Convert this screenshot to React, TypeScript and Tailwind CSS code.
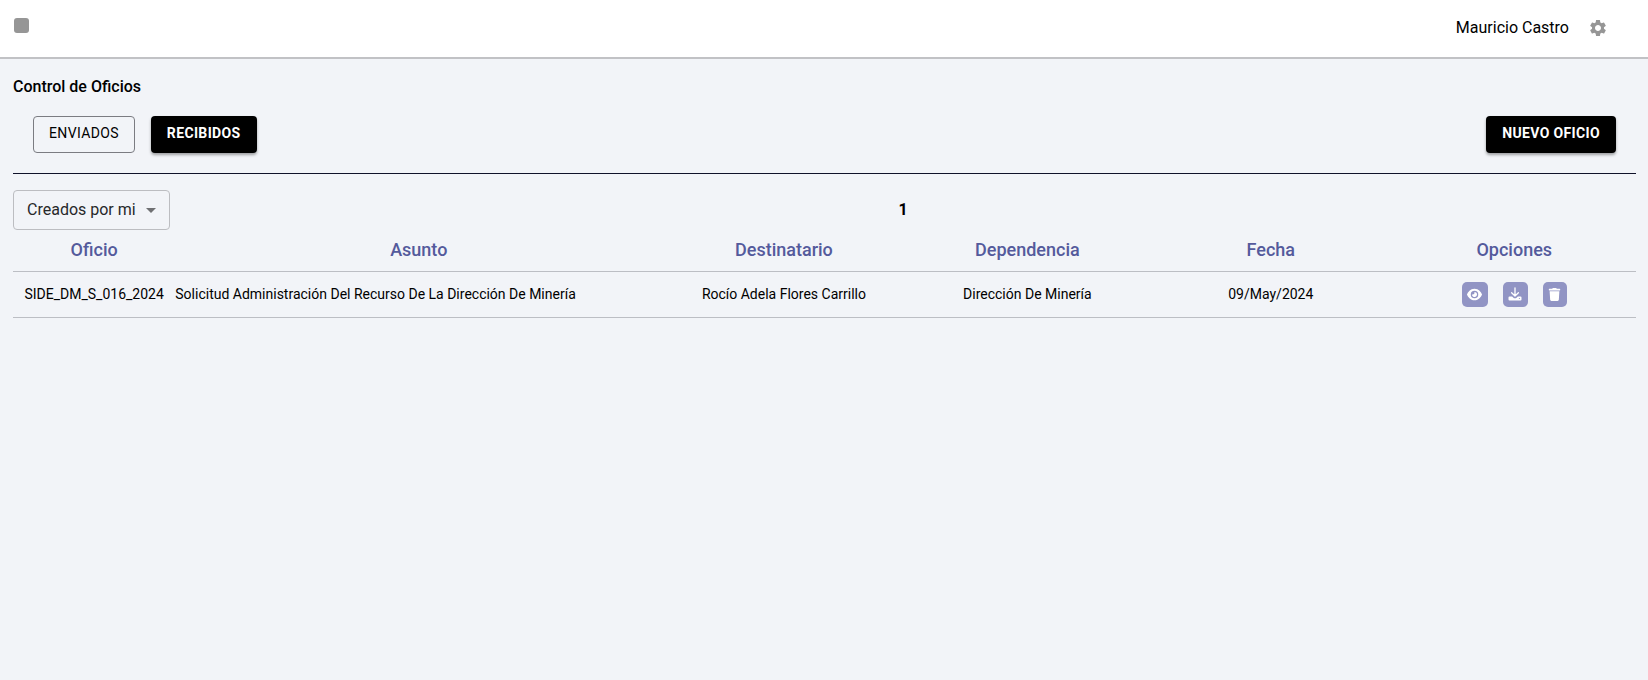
import React from "react";
import { MdArrowDropDown, MdSettings } from "react-icons/md";
import { FaEye } from "react-icons/fa6";
import { FaTrash } from "react-icons/fa";

const TrayDownload = () => (
  <svg viewBox="0 0 14 14" width="14" height="14" fill="none" aria-hidden="true">
    <path d="M7 .8v8M3.600 5.700 7 9l3.400-3.300" stroke="currentColor" strokeWidth="1.300" strokeLinecap="round" strokeLinejoin="round" />
    <path
      d="M1.500 9.500h2.600L6 11.200h2l1.900-1.700h2.600a1 1 0 0 1 1 1v2a1 1 0 0 1-1 1h-11a1 1 0 0 1-1-1v-2a1 1 0 0 1 1-1zM11.400 10.900a.6.6 0 1 0 0 1.200.6.6 0 0 0 0-1.200z"
      fill="currentColor"
      fillRule="evenodd"
    />
  </svg>
);

const oficios = [
  {
    oficio: "SIDE_DM_S_016_2024",
    asunto: "Solicitud Administración Del Recurso De La Dirección De Minería",
    destinatario: "Rocío Adela Flores Carrillo",
    dependencia: "Dirección De Minería",
    fecha: "09/May/2024",
  },
];

const columns = [
  { label: "Oficio", width: "w-[10%]" },
  { label: "Asunto", width: "w-[30%]" },
  { label: "Destinatario", width: "w-[15%]" },
  { label: "Dependencia", width: "w-[15%]" },
  { label: "Fecha", width: "w-[15%]" },
  { label: "Opciones", width: "w-[15%]" },
];

const filled =
  "h-[37px] rounded bg-black px-4 pb-1 text-sm font-bold tracking-wide text-white shadow-[0_2px_3px_rgba(0,0,0,0.35)]";
const option = "flex h-[25px] items-center justify-center rounded-[5px] bg-[#9194c4] text-white";

export default function App() {
  return (
    <div className="min-h-screen bg-[#f2f4f8] font-[Roboto,sans-serif] text-black">
      <header className="flex h-[59px] items-center justify-between border-b-2 border-[#c1c2c5] bg-white pb-[2px] pl-[14px] pr-10">
        <button aria-label="Menú" className="mb-1 h-[15px] w-[15px] rounded-[3px] bg-[#969696]" />
        <div className="flex items-center gap-[19px]">
          <span className="text-base">Mauricio Castro</span>
          <button aria-label="Configuración" className="text-[#969696]">
            <MdSettings size={20} />
          </button>
        </div>
      </header>

      <main className="pl-[13px] pr-3 pt-4">
        <h1 className="text-base font-medium">Control de Oficios</h1>
        <div className="flex items-center justify-between border-b border-[#10122a] px-5 pb-5 pt-[17px]">
          <div className="flex gap-4">
            <button className="h-[37px] rounded border border-[#7b7c82] px-[15px] pb-1 text-sm tracking-wide">ENVIADOS</button>
            <button className={filled}>RECIBIDOS</button>
          </div>
          <button className={filled}>NUEVO OFICIO</button>
        </div>

        <div className="flex items-center pt-4">
          <div className="relative w-[157px]">
            <select
              aria-label="Filtro de oficios"
              className="h-10 w-full appearance-none rounded border border-[#bcbdc1] bg-transparent pl-[13px] pr-6 text-base text-[#27282a]"
            >
              <option>Creados por mi</option>
            </select>
            <MdArrowDropDown size={24} className="pointer-events-none absolute right-[7px] top-2 text-[#6f7073]" />
          </div>
          <span className="flex-1 text-center text-base font-bold">1</span>
        </div>

        <table className="w-full table-fixed border-collapse text-center text-sm">
          <thead>
            <tr className="h-[41px] border-b border-[#bcbec4] text-lg leading-6 text-[#545a9c]">
              {columns.map((c) => (
                <th key={c.label} className={c.width + " p-0 font-medium"}>
                  {c.label}
                </th>
              ))}
            </tr>
          </thead>
          <tbody>
            {oficios.map((o) => (
              <tr key={o.oficio} className="h-[46px] border-b border-[#bcbec4]">
                <td className="p-0">{o.oficio}</td>
                <td className="p-0 text-left">{o.asunto}</td>
                <td className="p-0">{o.destinatario}</td>
                <td className="p-0">{o.dependencia}</td>
                <td className="p-0">{o.fecha}</td>
                <td className="p-0">
                  <div className="flex justify-center gap-[15px]">
                    <button aria-label="Ver" className={option + " w-[26px]"}>
                      <FaEye size={15} />
                    </button>
                    <button aria-label="Descargar" className={option + " w-[25px]"}>
                      <TrayDownload />
                    </button>
                    <button aria-label="Eliminar" className={option + " w-6"}>
                      <FaTrash size={13} />
                    </button>
                  </div>
                </td>
              </tr>
            ))}
          </tbody>
        </table>
      </main>
    </div>
  );
}
